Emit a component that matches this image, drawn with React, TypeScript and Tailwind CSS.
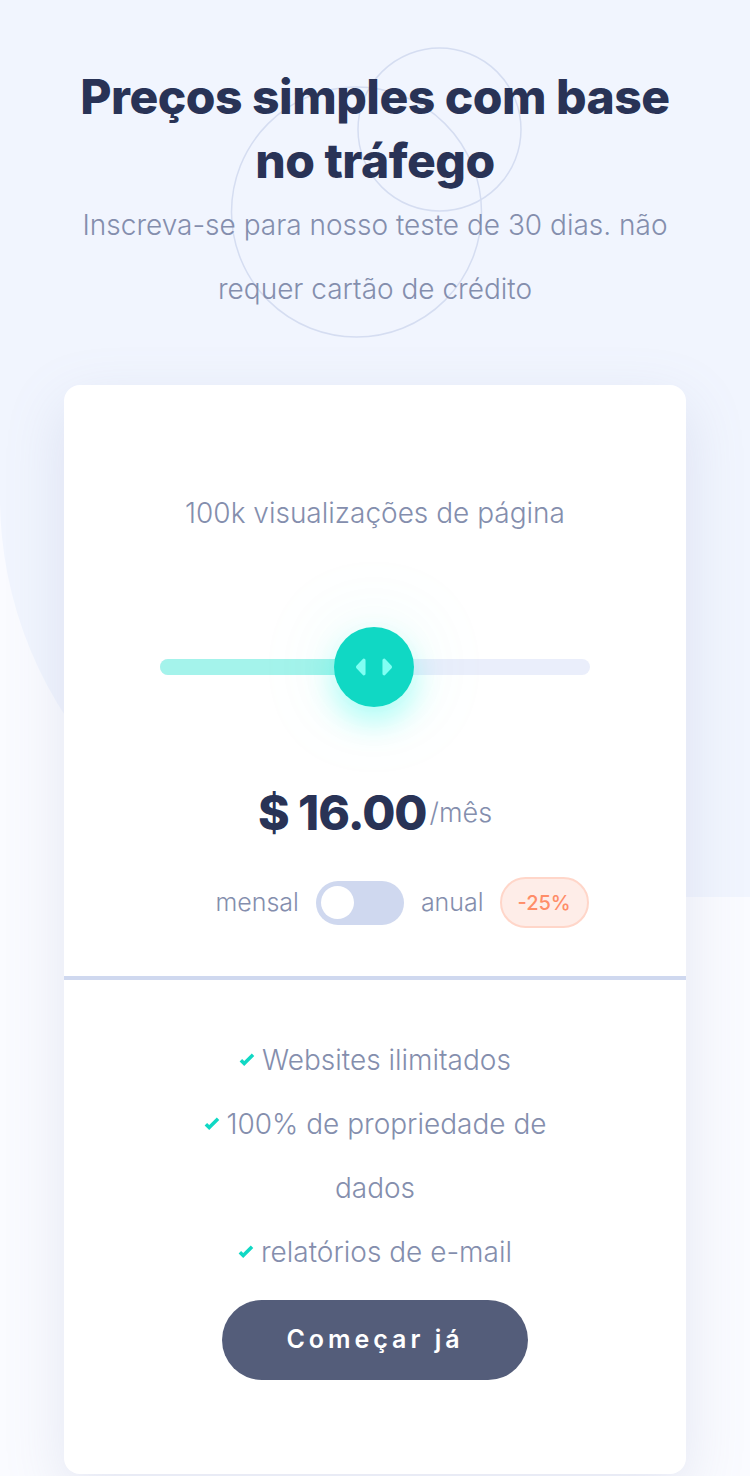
import React from "react";

const features = ["Websites ilimitados", "100% de propriedade de dados", "relatórios de e-mail"];

const CheckIcon = () => (
  <svg width="16" height="14" viewBox="0 0 9 8" className="inline-block mr-[7px] align-middle -mt-[4px]">
    <path d="M1 4.134l1.907 1.908L7.949 1" stroke="#10D8C4" strokeWidth="2" fill="none" />
  </svg>
);

const App = () => {
  return (
    <div className="relative min-h-[1476px] overflow-hidden bg-[#fafbff] font-['Inter',sans-serif]">
      {/* background shape + circles */}
      <div className="absolute top-0 left-0 w-full h-[897px] bg-[#f1f5fe] rounded-bl-[400px]" />
      <svg className="absolute left-0 top-0" width="750" height="360">
        <circle cx="356.5" cy="212" r="125" stroke="#d5ddf1" strokeWidth="1.5" fill="none" />
        <circle cx="439.5" cy="129.5" r="81.5" stroke="#d5ddf1" strokeWidth="1.5" fill="none" />
      </svg>

      <div className="relative px-16 pt-[65px]">
        <h1 className="mx-auto max-w-[610px] text-center text-[48px] leading-[64px] font-extrabold text-[#293356] tracking-[-0.5px]">
          Preços simples com base no tráfego
        </h1>
        <p className="mx-auto max-w-[610px] text-center text-[28px] leading-[64px] font-light text-[#848ead]">
          Inscreva-se para nosso teste de 30 dias. não requer cartão de crédito
        </p>

        {/* card */}
        <div className="mt-[64px] bg-white rounded-[16px] shadow-[0_20px_60px_rgba(127,137,185,0.18)]">
          <div className="pt-[96px] pb-[48px] px-[96px] flex flex-col items-center">
            <p className="text-[28px] leading-[64px] font-light text-[#848ead]">100k visualizações de página</p>

            {/* slider */}
            <div className="relative w-[430px] h-[80px] mt-[82px] flex items-center">
              <div className="h-[16px] w-full rounded-full bg-[#eaeefb] flex">
                <div className="h-full w-[214px] rounded-full bg-[#a4f3eb]" />
              </div>
              <div className="absolute left-[174px] top-0 w-[80px] h-[80px] rounded-full bg-[#10d8c4] flex items-center justify-center shadow-[0_15px_30px_rgba(0,255,231,0.3),0_0_90px_rgba(16,216,196,0.12)]">
                <svg width="38" height="22" viewBox="0 0 22 13">
                  <path
                    d="M16 2.558v7.884a1 1 0 001.735.679l3.639-3.943a1 1 0 000-1.356l-3.64-3.943A1 1 0 0016 2.558zM6 2.558v7.884a1 1 0 01-1.735.679L.626 7.178a1 1 0 010-1.356l3.64-3.943A1 1 0 016 2.558z"
                    fill="#80FFF3"
                  />
                </svg>
              </div>
            </div>

            {/* price */}
            <div className="mt-[74px] flex items-center h-[64px]">
              <span className="text-[48px] font-extrabold text-[#293356] tracking-[-1px]">$ 16.00</span>
              <span className="ml-[3px] text-[27px] font-light text-[#848ead]">/mês</span>
            </div>

            {/* billing toggle */}
            <div className="mt-[32px] ml-[54px] flex items-center h-[51px]">
              <span className="text-[25px] font-light text-[#848ead]">mensal</span>
              <div className="ml-[17px] w-[88px] h-[44px] rounded-full bg-[#cfd8ef] p-[5px] flex items-center">
                <div className="w-[33px] h-[33px] rounded-full bg-white" />
              </div>
              <span className="ml-[17px] text-[25px] font-light text-[#848ead]">anual</span>
              <span className="ml-[16px] w-[89px] h-[51px] rounded-full bg-[#feede8] border-2 border-[#ffd6c9] flex items-center justify-center text-[20px] font-medium text-[#ff8d68]">
                -25%
              </span>
            </div>
          </div>

          <div className="h-[4px] bg-[#cfd8ef]" />

          <div className="pt-[48px] pb-[94px] flex flex-col items-center">
            <ul className="w-[360px] text-center text-[28px] leading-[64px] font-light text-[#848ead]">
              {features.map((f, i) => (
                <li key={i}>
                  <CheckIcon />
                  {f}
                </li>
              ))}
            </ul>
            <button className="mt-[16px] w-[306px] h-[80px] rounded-full bg-[#545d7a] text-white text-[25px] font-semibold tracking-[4px]">
              Começar já
            </button>
          </div>
        </div>
      </div>
    </div>
  );
};

export default App;
